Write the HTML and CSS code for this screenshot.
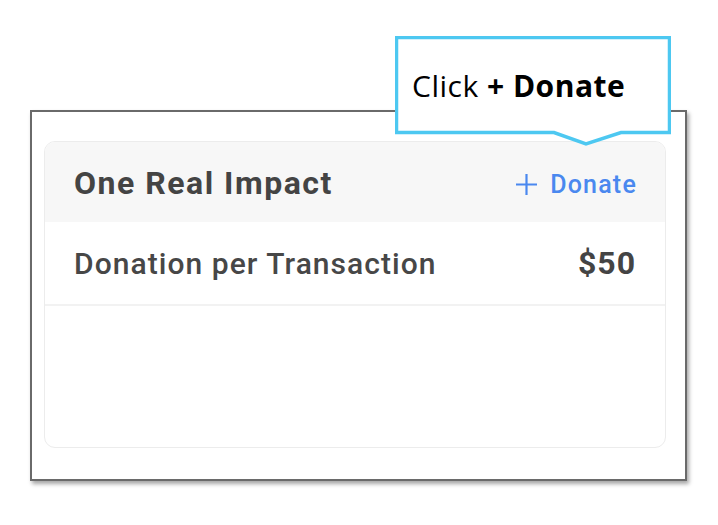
FILE: index.html
```html
<!DOCTYPE html>
<html>
<head>
<meta charset="utf-8">
<link rel="stylesheet" href="styles.css">
</head>
<body>
<div class="frame">
  <div class="card">
    <div class="card-head">
      <span class="title">One Real Impact</span>
      <span class="donate">
        <svg class="plus" width="23" height="23" viewBox="0 0 23 23"><path d="M11.5 1V22M1 11.5H22" stroke="currentColor" stroke-width="2.2" fill="none"/></svg>
        <span>Donate</span>
      </span>
    </div>
    <div class="row">
      <span class="label">Donation per Transaction</span>
      <span class="amount">$50</span>
    </div>
  </div>
</div>
<div class="callout">
  <svg class="callout-shape" width="276" height="112" viewBox="0 0 276 112">
    <path d="M1.5 1.5H274.5V96.5H226L191 108L159 96.5H1.5Z" fill="#fff" stroke="#4dc8f1" stroke-width="3.5" stroke-linejoin="miter"/>
  </svg>
  <p class="callout-text">Click <b>+ Donate</b></p>
</div>
</body>
</html>
```
FILE: styles.css
```css
html, body {
  margin: 0;
  padding: 0;
  background: #fff;
}
body {
  position: relative;
  width: 718px;
  height: 525px;
  overflow: hidden;
}
.frame {
  box-sizing: border-box;
  margin: 110px 0 0 30px;
  width: 657px;
  height: 371px;
  border: 2px solid #6a6a6a;
  box-shadow: 2px 3px 4px rgba(0,0,0,0.35);
  padding: 29px 19px 32px 12px;
}
.card {
  box-sizing: border-box;
  height: 307px;
  border: 1px solid #ececec;
  border-radius: 11px;
  overflow: hidden;
  font-family: Roboto, "Liberation Sans", sans-serif;
}
.card-head {
  height: 80px;
  background: #f7f7f7;
  display: flex;
  align-items: center;
  justify-content: space-between;
  padding: 0 29px;
}
.title {
  font-size: 32px;
  font-weight: 700;
  letter-spacing: 1.5px;
  color: #444;
  margin-top: 1px;
}
.donate {
  display: flex;
  align-items: center;
  gap: 12px;
  color: #4a88ef;
  font-size: 25px;
  font-weight: 500;
  letter-spacing: 1.2px;
  margin-top: 4px;
  margin-right: -1px;
}
.plus {
  display: block;
}
.row {
  height: 84px;
  border-bottom: 2px solid #f2f2f2;
  display: flex;
  align-items: center;
  justify-content: space-between;
  padding: 0 29px;
  box-sizing: border-box;
}
.label {
  font-size: 30px;
  font-weight: 500;
  letter-spacing: 1.05px;
  color: #474747;
}
.amount {
  font-size: 32px;
  font-weight: 700;
  letter-spacing: 1px;
  color: #444;
}
.callout {
  position: absolute;
  left: 395px;
  top: 36px;
  width: 276px;
  height: 112px;
}
.callout-shape {
  position: absolute;
  left: 0;
  top: 0;
}
.callout-text {
  position: relative;
  margin: 0;
  padding: 30px 0 0 17px;
  font-family: "Open Sans", sans-serif;
  font-size: 30px;
  letter-spacing: 0.5px;
  color: #000;
  line-height: 40px;
}
.callout-text b {
  font-weight: 700;
}
```
